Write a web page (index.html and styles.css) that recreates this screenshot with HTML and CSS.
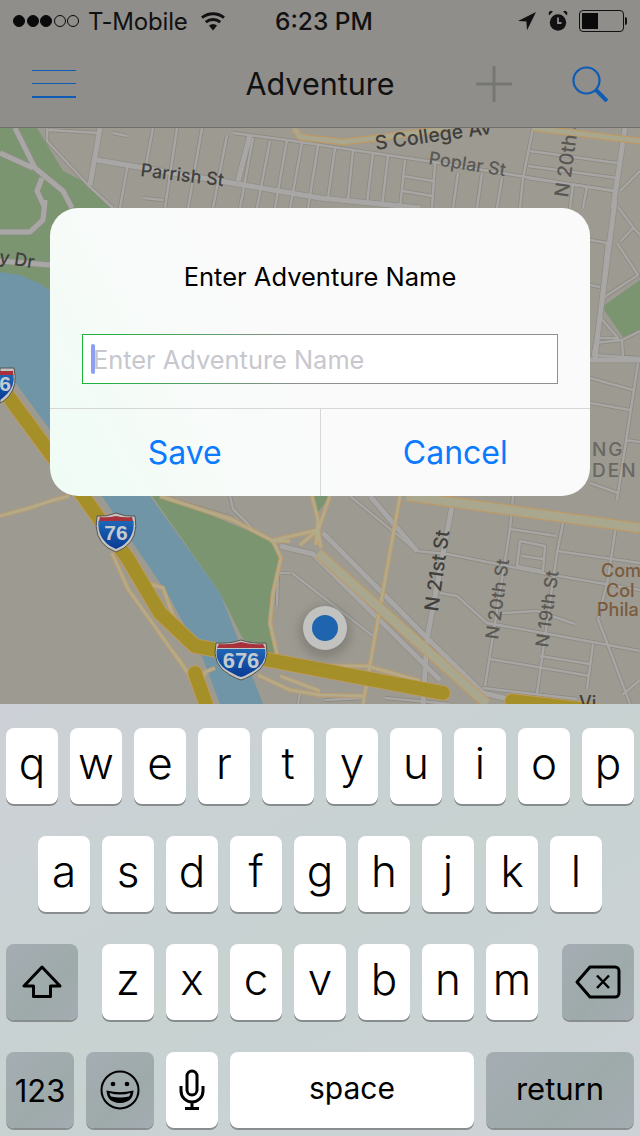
FILE: index.html
```html
<!DOCTYPE html>
<html lang="en">
<head>
<meta charset="utf-8">
<title>Adventure</title>
<link rel="stylesheet" href="styles.css">
</head>
<body>
<div class="phone">
  <header class="chrome">
    <div class="status">
      <div class="status-left">
        <span class="signal"><i class="dot on"></i><i class="dot on"></i><i class="dot on"></i><i class="dot"></i><i class="dot"></i></span>
        <span class="carrier">T-Mobile</span>
        <svg class="wifi" viewBox="0 0 26 20"><path class="wifi-fill" d="M13 19.500 8.900 14.600a6.400 6.400 0 0 1 8.200 0Z"/><path class="wifi-arc" d="M5.800 11.200a11 11 0 0 1 14.400 0M2 6.700a17 17 0 0 1 22 0"/></svg>
      </div>
      <div class="time">6:23 PM</div>
      <div class="status-right">
        <svg class="loc" viewBox="0 0 20 20"><path class="ink" d="M19 1 1 10l8.400.6.6 8.600Z"/></svg>
        <svg class="alarm" viewBox="0 0 20 22"><circle class="ink" cx="10" cy="12.500" r="8.200"/><path class="alarm-hand" d="M10 7.500v5.500h3.500"/><path class="ink" d="M1 5.500 5 1.500 2.500.8.600 2.600ZM19 5.500 15 1.500l2.500-.7 1.900 1.800Z"/></svg>
        <span class="battery"><span class="battery-level"></span></span>
        <span class="battery-tip"></span>
      </div>
    </div>
    <nav class="navbar">
      <div class="menu"><i></i><i></i><i></i></div>
      <h1 class="nav-title">Adventure</h1>
      <svg class="plus" viewBox="0 0 36 36"><path d="M18 0v36M0 18h36"/></svg>
      <svg class="search" viewBox="0 0 36 36"><circle cx="14.500" cy="14.500" r="13"/><path class="search-handle" d="M23.500 23.500 35 35"/></svg>
    </nav>
  </header>

  <main class="map">
    <svg class="map-art" viewBox="0 128 640 576" preserveAspectRatio="none">
      <defs>
        <linearGradient id="shieldBlue" x1="0" y1="0" x2="0" y2="1">
          <stop class="blue-top" offset="0"/>
          <stop class="blue-bottom" offset="1"/>
        </linearGradient>
        <g id="streets">
          <path d="M47 128V141L88 185 113 208M48 130 100 133M113 133 127 136M233 133 287 140 353 150 427 161 520 176 613 191"/>
          <path d="M153 128 145 171M143 198 163 200M128 163 120 208M177 128 165 208M202 128 188 208M227 135 213 208M253 138 240 208M270 141 257 208M287 140 275 208M302 143 290 208M318 146 308 208"/>
          <path d="M335 148 328 198M353 150 348 200M373 153 367 203M388 156 382 206M405 160 400 208M403 176 433 181M403 191 432 196M435 163 432 208M458 173 453 208M482 173 477 208M502 178 497 208M533 128 523 178 520 208"/>
          <path d="M530 151 617 163M528 166 617 178M527 178 617 191M573 184 570 208M587 186 583 208M640 171 620 191M625 128 613 208"/>
          <path d="M618 207 633 227 640 235M633 228 620 242M617 243 638 275 603 298M590 240 607 243 597 340M590 285 600 287M600 317 618 338 597 338ZM595 343 622 340 623 357 593 355ZM622 340 640 331M623 357 640 358M590 378 633 390M590 403 630 410M638 363 617 500M590 483 618 493M625 440 640 442"/>
          <path d="M160 496 233 518M230 496 233 509 252 528M277 606 278 573 290 573M292 573 373 636M350 496 417 551 447 554 547 574 640 590"/>
          <path d="M510 529 557 536M557 551 640 563M520 541 545 546 543 571 517 566ZM522 556 543 559M440 593 457 596 487 623 543 633 603 644 640 651M502 613 537 611 575 624M490 659 590 676M540 656 590 664M593 644 587 689M483 688 577 699M513 496 510 529 485 686M565 513 557 553 537 693M617 519 608 579 598 619 630 704M640 680 622 695"/>
          <path d="M300 693 298 704M325 700 363 698M385 698 450 704"/>
        </g>
        <g id="thick">
          <path d="M100 128 90 185M97 160 320 198 420 208"/>
          <path d="M250 135 238 181M625 128 613 208M615 200 597 340 595 360M590 360 640 360M452 506 427 639 423 704"/>
          <path d="M323 533 427 638 483 693 530 704M280 546 313 554 423 663 440 680M370 496 417 551"/>
        </g>
        <g id="parkways">
          <path d="M15 128 35 168 63 191 72 208M0 153 33 168M42 178 37 191 45 208M45 200 43 220 30 232H0M0 261 50 265"/>
        </g>
        <g id="secondary">
          <path d="M0 516 33 507 50 501 69 496M160 496 233 520 273 541 290 541M312 496 318 520 316 545M270 541 318 530 330 496M300 545 318 530 321 548"/>
          <path d="M273 541 281 558 273 593 270 623 278 659M112 553 128 589 188 673 203 704M150 584 163 588 177 626M128 589 168 645 185 668M202 680 205 672 215 668M258 675 290 690 320 695 363 696M323 666H367L420 681M280 676 320 691"/>
          <path d="M400 496 363 704"/>
        </g>
      </defs>

      <rect class="land" x="0" y="128" width="640" height="576"/>
      <path class="green" d="M0 128H37L63 171 90 185 113 208 70 290 50 290 0 272Z"/>
      <path class="green" d="M152 496H165L273 541 281 558 273 593 270 623 278 659 243 639 220 593Z"/>
      <path class="green" d="M602 307 640 280V330L623 337Z"/>
      <path class="green" d="M312 496H330L318 512Z"/>
      <path class="water" d="M0 272 20 275 43 285 60 300 110 440 150 496 220 593 263 704H220L203 659 167 593 137 549 102 496 50 430 15 382 0 370Z"/>

      <use href="#parkways" class="road-case-wide"/>
      <use href="#parkways" class="road-wide"/>
      <use href="#streets" class="road-case"/>
      <use href="#thick" class="road-case-wide"/>
      <use href="#streets" class="road"/>
      <use href="#thick" class="road-wide"/>

      <use href="#secondary" class="minor-case"/>
      <use href="#secondary" class="minor"/>
      <path class="arterial-case" d="M294 128 300 137 343 142 377 138 450 128M533 128 640 141"/>
      <path class="arterial" d="M294 128 300 137 343 142 377 138 450 128M533 128 640 141"/>
      <path class="major-case" d="M318 553 487 704M407 496 640 528"/>
      <path class="major" d="M318 553 487 704M407 496 640 528"/>

      <path class="highway-case" d="M0 385 50 453 83 496 128 559 160 613 195 646 290 664 443 693"/>
      <path class="highway-case" d="M195 673 208 710M512 701 640 716"/>
      <path class="highway" d="M0 385 50 453 83 496 128 559 160 613 195 646 290 664 443 693"/>
      <path class="highway" d="M195 673 208 710M512 701 640 716"/>

      <g>
        <path class="shield-edge" d="M0 368H14Q18 385 9 396 3 402 0 403Z"/>
        <path class="shield-red" d="M0 371H13L13.500 375H0Z"/>
        <path class="shield-blue" d="M0 375H13.500Q15 386 7 394 3 398 0 400Z"/>
        <text class="shield-num" x="5" y="391">6</text>
      </g>
      <g>
        <path class="shield-edge" d="M97 516Q107 517 116 513 125 517 135 516 139 538 124 548 118 551 116 552 114 551 108 548 93 538 97 516Z"/>
        <path class="shield-red" d="M100 517Q108 518 116 516 124 518 132 517L133 521H99Z"/>
        <path class="shield-blue" d="M98.500 521H133.500Q135 537 122 546 118 548 116 549 114 548 110 546 97 537 98.500 521Z"/>
        <text class="shield-num" x="116" y="540">76</text>
      </g>
      <g>
        <path class="shield-edge" d="M216 643Q230 644 241 640 252 644 266 643 271 665 252 675 245 679 241 680 237 679 230 675 211 665 216 643Z"/>
        <path class="shield-red" d="M219 644Q231 645 241 642 251 645 263 644L265 648H217Z"/>
        <path class="shield-blue" d="M217 649H265Q268 664 250 673 245 676 241 677 237 676 232 673 214 664 217 649Z"/>
        <text class="shield-num shield-num-lg" x="241" y="668">676</text>
      </g>

      <circle class="halo-glow" cx="325" cy="632" r="26"/>
      <circle class="halo" cx="325" cy="628" r="22"/>
      <circle class="me" cx="325" cy="628" r="13"/>

      <text class="label label-dark" transform="translate(140 176) rotate(7)">Parrish St</text>
      <text class="label label-dark label-lg" transform="translate(376 150) rotate(-8)">S College Av</text>
      <text class="label" transform="translate(428 164) rotate(9)">Poplar St</text>
      <text class="label label-lg" transform="translate(568 198) rotate(-82)">N 20th St</text>
      <text class="label label-dark" transform="translate(-6 262) rotate(9)">ly Dr</text>
      <text class="label label-caps" x="592" y="456">NG</text>
      <text class="label label-caps" x="592" y="477">DEN</text>
      <text class="label label-dark label-lg" transform="translate(438 612) rotate(-82)">N 21st St</text>
      <text class="label" transform="translate(498 640) rotate(-82)">N 20th St</text>
      <text class="label" transform="translate(548 648) rotate(-82)">N 19th St</text>
      <text class="label label-brown" x="601" y="577">Com</text>
      <text class="label label-brown" x="606" y="597">Col</text>
      <text class="label label-brown" x="597" y="616">Phila</text>
      <text class="label label-dark" x="579" y="709">Vi</text>
    </svg>

    <section class="dialog">
      <h2 class="dialog-title">Enter Adventure Name</h2>
      <div class="field"><span class="caret"></span><span class="placeholder">Enter Adventure Name</span></div>
      <div class="actions">
        <button class="action">Save</button>
        <button class="action">Cancel</button>
      </div>
    </section>
  </main>

  <section class="keyboard">
    <div class="row"><b class="key">q</b><b class="key">w</b><b class="key">e</b><b class="key">r</b><b class="key">t</b><b class="key">y</b><b class="key">u</b><b class="key">i</b><b class="key">o</b><b class="key">p</b></div>
    <div class="row"><b class="key">a</b><b class="key">s</b><b class="key">d</b><b class="key">f</b><b class="key">g</b><b class="key">h</b><b class="key">j</b><b class="key">k</b><b class="key">l</b></div>
    <div class="row row-split">
      <b class="key key-dark key-wide"><svg class="k-icon shift" viewBox="0 0 40 34"><path d="M20 2 2 21h9.500v10.500h17V21H38Z"/></svg></b>
      <div class="letters"><b class="key">z</b><b class="key">x</b><b class="key">c</b><b class="key">v</b><b class="key">b</b><b class="key">n</b><b class="key">m</b></div>
      <b class="key key-dark key-wide"><svg class="k-icon del" viewBox="0 0 46 34"><path d="M15 2H40a4 4 0 0 1 4 4V28a4 4 0 0 1-4 4H15L2 17Z"/><path class="del-x" d="M22 10.500 34 23M34 10.500 22 23"/></svg></b>
    </div>
    <div class="row row-bottom">
      <b class="key key-dark key-num">123</b>
      <b class="key key-dark key-emoji"><svg class="k-icon emoji" viewBox="0 0 40 40"><circle cx="20" cy="20" r="18.500"/><circle class="fill" cx="13" cy="14" r="2.300"/><circle class="fill" cx="27" cy="14" r="2.300"/><path class="fill" d="M6.500 20.500Q20 24 33.500 20.500 33 32.500 20 33 7 32.500 6.500 20.500Z"/><path class="teeth" d="M9.500 23Q20 26 30.500 23 30 25.500 29 26.500 20 28.500 11 26.500 10 25.500 9.500 23Z"/></svg></b>
      <b class="key key-mic"><svg class="k-icon mic" viewBox="0 0 26 42"><rect x="8" y="2" width="10" height="24" rx="5"/><path d="M2 17v5a11 11 0 0 0 22 0v-5M13 33v6M6 39.500h14"/></svg></b>
      <b class="key key-space">space</b>
      <b class="key key-dark key-return">return</b>
    </div>
  </section>
</div>
</body>
</html>
```

FILE: styles.css
```css
* { box-sizing: border-box; margin: 0; padding: 0; }
html, body { width: 640px; height: 1136px; overflow: hidden; }
body { font-family: Inter, "Liberation Sans", sans-serif; color: #000; }

.phone { position: relative; width: 640px; height: 1136px; display: flex; flex-direction: column; }

/* top chrome */
.chrome { height: 128px; flex: none; background: #8f8e8b; border-bottom: 1px solid #6f6e6c; }
.status { height: 40px; position: relative; display: flex; align-items: center; justify-content: space-between; padding: 2px 13px 0; }
.status-left { display: flex; align-items: center; }
.signal { display: flex; gap: 1.500px; width: 68px; }
.dot { width: 12px; height: 12px; border-radius: 50%; border: 1px solid #0a0a0a; }
.dot.on { background: #0a0a0a; }
.carrier { font-size: 24px; letter-spacing: -0.2px; margin-left: 7px; color: #111; }
.wifi { width: 26px; height: 20px; margin-left: 12px; }
.wifi-fill { fill: #111; }
.wifi-arc { fill: none; stroke: #111; stroke-width: 3; }
.time { position: absolute; left: 275px; top: 7px; font-size: 24.500px; font-weight: 500; color: #111; line-height: 28px; }
.status-right { display: flex; align-items: center; }
.loc { width: 20px; height: 20px; margin-right: 11px; }
.alarm { width: 20px; height: 22px; margin-right: 11px; }
.ink { fill: #111; }
.alarm-hand { fill: none; stroke: #8f8e8b; stroke-width: 1.800; }
.battery { width: 45px; height: 22px; border: 1px solid #111; border-radius: 4px; padding: 2px; display: block; }
.battery-level { display: block; width: 16px; height: 100%; background: #0a0a0a; }
.battery-tip { width: 2px; height: 8px; background: #111; margin-left: 1px; border-radius: 0 2px 2px 0; }

.navbar { height: 87px; position: relative; display: flex; align-items: center; padding: 0 32px; }
.menu { width: 44px; height: 28px; display: flex; flex-direction: column; justify-content: space-between; }
.menu i { display: block; height: 1.500px; background: #0f5cb5; }
.nav-title { font-size: 30.500px; font-weight: 400; position: absolute; left: 0; right: 0; top: 24px; text-align: center; line-height: 40px; color: #111; }
.plus { width: 36px; height: 36px; margin-left: auto; }
.plus path { stroke: #767674; stroke-width: 3; fill: none; }
.search { width: 36px; height: 36px; margin-left: 60px; }
.search circle { fill: none; stroke: #0f5cb5; stroke-width: 2.200; }
.search path { fill: none; stroke: #0f5cb5; stroke-width: 4; }

/* map */
.map { position: relative; flex: none; height: 576px; overflow: hidden; background: #9d9a92; }
.map-art { position: absolute; left: 0; top: 0; width: 640px; height: 576px; display: block; }
.land { fill: #9d9a92; }
.green { fill: #7a9570; }
.water { fill: #6f95a6; }
.road-case { fill: none; stroke: #8b887e; stroke-width: 4; stroke-linejoin: round; }
.road { fill: none; stroke: #a7a6a5; stroke-width: 2.500; stroke-linejoin: round; }
.road-case-wide { fill: none; stroke: #8f8d85; stroke-width: 6.500; stroke-linejoin: round; }
.road-wide { fill: none; stroke: #a8a7a6; stroke-width: 5; stroke-linejoin: round; }
.minor-case { fill: none; stroke: #bd9c6c; stroke-width: 4.500; stroke-linejoin: round; }
.minor { fill: none; stroke: #b2ab8c; stroke-width: 2.500; stroke-linejoin: round; }
.arterial-case { fill: none; stroke: #bd9966; stroke-width: 7; stroke-linejoin: round; }
.arterial { fill: none; stroke: #a9a88f; stroke-width: 4.500; stroke-linejoin: round; }
.major-case { fill: none; stroke: #bd9966; stroke-width: 11; stroke-linejoin: round; }
.major { fill: none; stroke: #a9a88f; stroke-width: 8.500; stroke-linejoin: round; }
.highway-case { fill: none; stroke: #c09a5c; stroke-width: 15.500; stroke-linejoin: round; stroke-linecap: round; }
.highway { fill: none; stroke: #a58f28; stroke-width: 13.500; stroke-linejoin: round; stroke-linecap: round; }
.shield-edge { fill: #c4c4c2; stroke: #55544f; stroke-width: 1; }
.shield-red { fill: #a8323c; }
.shield-blue { fill: url(#shieldBlue); }
.blue-top { stop-color: #1f66b6; }
.blue-bottom { stop-color: #083a95; }
.shield-num { font-family: "Liberation Sans", sans-serif; font-weight: 700; font-size: 21px; fill: #c3cad0; text-anchor: middle; }
.shield-num-lg { font-size: 22px; }
.halo-glow { fill: #6f6d66; opacity: .55; filter: blur(5px); }
.halo { fill: #c2c2c1; }
.me { fill: #1f64ae; }
.label { font-family: Inter, "Liberation Sans", sans-serif; font-size: 18px; font-weight: 500; fill: #5a5854; }
.label-lg { font-size: 19.500px; }
.label-dark { fill: #403f3c; }
.label-caps { letter-spacing: 2px; fill: #6a6862; font-size: 19px; }
.label-brown { fill: #7b5a3c; }

/* dialog */
.dialog {
  position: absolute; left: 50px; top: 80px; width: 540px; height: 288px;
  border-radius: 28px; overflow: hidden; display: flex; flex-direction: column;
  background: linear-gradient(60deg, #eefcf4 0%, #f8fbf9 28%, #fafafa 50%, #fafafa 100%);
}
.dialog-title { font-size: 25.500px; font-weight: 400; text-align: center; line-height: 30px; margin-top: 54px; color: #000; }
.field {
  margin: 42px 32px 0; height: 50px; background: #fff; display: flex; align-items: center; padding-left: 8px;
  border: 1px solid #8f8f8f; border-image: linear-gradient(90deg, #18b53a, #8f8f8f 45%) 1;
}
.caret { width: 4px; height: 30px; border-radius: 2px; background: #8c9ff5; flex: none; }
.placeholder { font-size: 25.400px; color: #c7c7cd; margin-left: -2px; }
.actions { margin-top: 24px; flex: 1; display: flex; border-top: 1px solid #d6d8d7; }
.action {
  flex: 1; border: 0; background: none; color: #0a7aff; font: 400 32px Inter, "Liberation Sans", sans-serif;
}
.action + .action { border-left: 1px solid #d6d8d7; }

/* keyboard */
.keyboard {
  height: 432px; flex: none; padding: 24px 6px 0; display: flex; flex-direction: column; gap: 32px;
  background: linear-gradient(150deg, #cdd1d7 0%, #c8d2d1 50%, #cdd2d6 100%);
}
.row { display: flex; justify-content: center; gap: 12px; height: 76px; }
.row-split { justify-content: space-between; }
.letters { display: flex; gap: 12px; }
.key {
  width: 52px; height: 76px; border-radius: 8px; background: #fff; box-shadow: 0 2px 0 #898d8e;
  display: flex; align-items: center; justify-content: center;
  font-size: 44px; font-weight: 300; color: #000; padding-bottom: 6px;
}
.key-dark { background: linear-gradient(135deg, #a5adb3, #9eaaaa 60%, #a4acb2); }
.key-wide { width: 72px; padding-bottom: 0; }
.row-bottom { justify-content: flex-start; }
.key-num { width: 68px; font-size: 31px; font-weight: 400; padding-bottom: 0; }
.key-emoji { width: 68px; padding-bottom: 0; }
.key-mic { padding-bottom: 0; }
.key-space { width: 244px; font-size: 30px; font-weight: 400; padding-bottom: 4px; }
.key-return { width: 148px; font-size: 31px; font-weight: 400; padding-bottom: 4px; }
.k-icon { display: block; fill: none; stroke: #000; }
.shift { width: 40px; height: 34px; stroke-width: 3; stroke-linejoin: round; }
.del { width: 46px; height: 34px; stroke-width: 3; stroke-linejoin: round; }
.del-x { stroke-width: 2.500; }
.emoji { width: 40px; height: 40px; stroke-width: 2; }
.emoji .fill { fill: #000; stroke: none; }
.emoji .teeth { fill: #a3adb3; stroke: none; }
.mic { width: 26px; height: 42px; stroke-width: 3; }
```
